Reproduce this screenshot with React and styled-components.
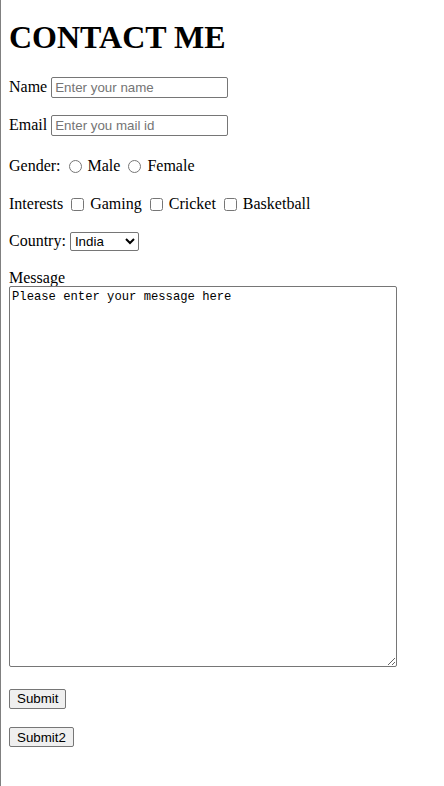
import React from "react";
import styled, { createGlobalStyle } from "styled-components";

const GlobalStyle = createGlobalStyle`
  html, body {
    margin: 0;
    padding: 0;
    background: #fff;
  }
  body {
    font-family: "Liberation Serif", "Times New Roman", serif;
    font-size: 16px;
    color: #000;
  }
`;

const Page = styled.div`
  min-height: 786px;
  box-sizing: border-box;
  border-left: 1px solid #808080;
  padding: 1px 8px 8px 8px;
`;

const Title = styled.h1`
  font-size: 32px;
  font-weight: bold;
  margin: 18px 0 20px;
  line-height: 37px;
`;

const Row = styled.p`
  margin: 0 0 ${(p) => p.$after || 16}px;
  line-height: 22px;
  display: flex;
  align-items: center;
  white-space: pre;
`;

const Label = styled.span``;

const TextInput = styled.input`
  width: 177px;
  height: 21px;
  box-sizing: border-box;
  border: 1px solid #767676;
  border-radius: 2px;
  padding: 1px 3px;
  margin: 0 0 0 4px;
  font-family: "Liberation Sans", Arial, sans-serif;
  font-size: 13.33px;
  &::placeholder {
    color: #757575;
  }
`;

const Choice = styled.input`
  margin: 0 6px 0 8px;
  width: 13px;
  height: 13px;
`;

const Select = styled.select`
  width: 69px;
  height: 19px;
  margin-left: 4px;
  font-family: "Liberation Sans", Arial, sans-serif;
  font-size: 13.33px;
  border: 1px solid #767676;
  border-radius: 2px;
  background: #fff;
  color: #000;
`;

const MessageBlock = styled.div`
  margin: 0 0 21px;
  display: flex;
  flex-direction: column;
  align-items: flex-start;
  line-height: 17px;
`;

const TextArea = styled.textarea`
  width: 388px;
  height: 381px;
  box-sizing: border-box;
  border: 1px solid #767676;
  border-radius: 2px;
  padding: 2px 2px;
  margin: 0;
  font-family: "Liberation Mono", "Courier New", monospace;
  font-size: 12.2px;
  line-height: 16px;
  color: #000;
`;

const ButtonRow = styled.div`
  margin: 0 0 18px;
  line-height: 20px;
`;

const Button = styled.button`
  font-family: "Liberation Sans", Arial, sans-serif;
  font-size: 13.33px;
  color: #000;
  background: #efefef;
  border: 1px solid #767676;
  border-radius: 2px;
  padding: 1px 7px;
  height: 20px;
  margin: 0;
`;

export default function App() {
  return (
    <>
      <GlobalStyle />
      <Page>
        <Title>CONTACT ME</Title>
        <form onSubmit={(e) => e.preventDefault()}>
          <Row>
            <Label>Name</Label>
            <TextInput type="text" placeholder="Enter your name" />
          </Row>
          <Row $after={19}>
            <Label>Email</Label>
            <TextInput type="email" placeholder="Enter you mail id" />
          </Row>
          <Row>
            <Label>Gender:</Label>
            <Choice type="radio" name="gender" />
            <Label>Male</Label>
            <Choice type="radio" name="gender" />
            <Label>Female</Label>
          </Row>
          <Row $after={15}>
            <Label>Interests</Label>
            <Choice type="checkbox" />
            <Label>Gaming</Label>
            <Choice type="checkbox" />
            <Label>Cricket</Label>
            <Choice type="checkbox" />
            <Label>Basketball</Label>
          </Row>
          <Row $after={17}>
            <Label>Country:</Label>
            <Select defaultValue="India">
              <option>India</option>
              <option>USA</option>
              <option>UK</option>
            </Select>
          </Row>
          <MessageBlock>
            <Label>Message</Label>
            <TextArea defaultValue="Please enter your message here" />
          </MessageBlock>
          <ButtonRow>
            <Button type="submit">Submit</Button>
          </ButtonRow>
          <ButtonRow>
            <Button type="button">Submit2</Button>
          </ButtonRow>
        </form>
      </Page>
    </>
  );
}
